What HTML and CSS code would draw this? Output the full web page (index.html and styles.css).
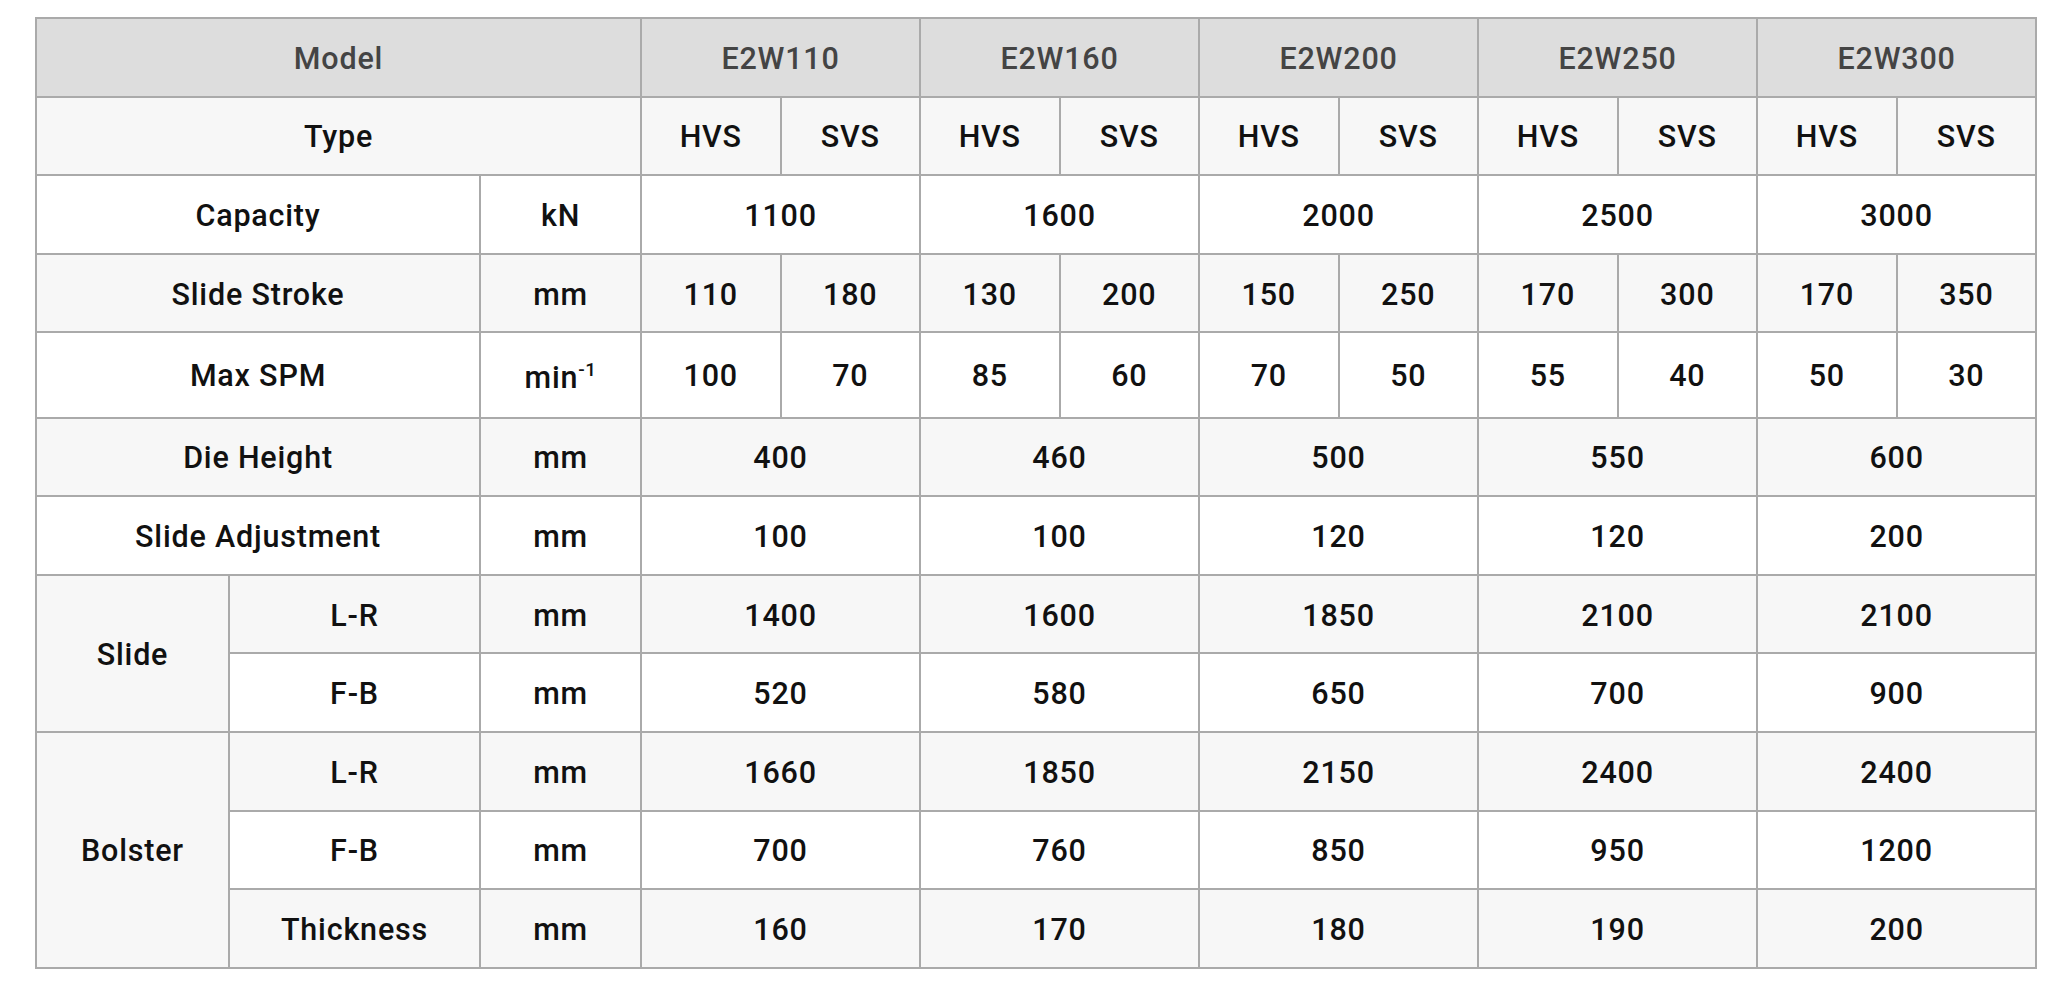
FILE: index.html
```html
<!DOCTYPE html>
<html lang="en">
<head>
<meta charset="utf-8">
<title>E2W Specifications</title>
<link rel="stylesheet" href="styles.css">
</head>
<body>
<table class="spec">
  <colgroup>
    <col class="c-group"><col class="c-label"><col class="c-unit">
    <col class="c-data"><col class="c-data"><col class="c-data"><col class="c-data"><col class="c-data">
    <col class="c-data"><col class="c-data"><col class="c-data"><col class="c-data"><col class="c-data">
  </colgroup>
  <thead>
    <tr>
      <th colspan="3">Model</th>
      <th colspan="2">E2W110</th>
      <th colspan="2">E2W160</th>
      <th colspan="2">E2W200</th>
      <th colspan="2">E2W250</th>
      <th colspan="2">E2W300</th>
    </tr>
  </thead>
  <tbody>
    <tr>
      <td colspan="3">Type</td>
      <td>HVS</td><td>SVS</td><td>HVS</td><td>SVS</td><td>HVS</td><td>SVS</td><td>HVS</td><td>SVS</td><td>HVS</td><td>SVS</td>
    </tr>
    <tr>
      <td colspan="2">Capacity</td><td>kN</td>
      <td colspan="2">1100</td><td colspan="2">1600</td><td colspan="2">2000</td><td colspan="2">2500</td><td colspan="2">3000</td>
    </tr>
    <tr>
      <td colspan="2">Slide Stroke</td><td>mm</td>
      <td>110</td><td>180</td><td>130</td><td>200</td><td>150</td><td>250</td><td>170</td><td>300</td><td>170</td><td>350</td>
    </tr>
    <tr class="spm">
      <td colspan="2">Max SPM</td><td class="unit-sup">min<sup>-1</sup></td>
      <td>100</td><td>70</td><td>85</td><td>60</td><td>70</td><td>50</td><td>55</td><td>40</td><td>50</td><td>30</td>
    </tr>
    <tr>
      <td colspan="2">Die Height</td><td>mm</td>
      <td colspan="2">400</td><td colspan="2">460</td><td colspan="2">500</td><td colspan="2">550</td><td colspan="2">600</td>
    </tr>
    <tr>
      <td colspan="2">Slide Adjustment</td><td>mm</td>
      <td colspan="2">100</td><td colspan="2">100</td><td colspan="2">120</td><td colspan="2">120</td><td colspan="2">200</td>
    </tr>
    <tr>
      <td rowspan="2">Slide</td><td>L-R</td><td>mm</td>
      <td colspan="2">1400</td><td colspan="2">1600</td><td colspan="2">1850</td><td colspan="2">2100</td><td colspan="2">2100</td>
    </tr>
    <tr>
      <td>F-B</td><td>mm</td>
      <td colspan="2">520</td><td colspan="2">580</td><td colspan="2">650</td><td colspan="2">700</td><td colspan="2">900</td>
    </tr>
    <tr>
      <td rowspan="3">Bolster</td><td>L-R</td><td>mm</td>
      <td colspan="2">1660</td><td colspan="2">1850</td><td colspan="2">2150</td><td colspan="2">2400</td><td colspan="2">2400</td>
    </tr>
    <tr>
      <td>F-B</td><td>mm</td>
      <td colspan="2">700</td><td colspan="2">760</td><td colspan="2">850</td><td colspan="2">950</td><td colspan="2">1200</td>
    </tr>
    <tr>
      <td>Thickness</td><td>mm</td>
      <td colspan="2">160</td><td colspan="2">170</td><td colspan="2">180</td><td colspan="2">190</td><td colspan="2">200</td>
    </tr>
  </tbody>
</table>
</body>
</html>
```
FILE: styles.css
```css
html, body {
  margin: 0;
  padding: 0;
  background: #ffffff;
}

.spec {
  border-collapse: collapse;
  table-layout: fixed;
  width: 2000px;
  margin: 17px 0 0 35px;
  font-family: Roboto, "Liberation Sans", Arial, sans-serif;
  font-weight: 500;
  font-size: 30.5px;
  letter-spacing: 0.8px;
  color: #111111;
}

.c-group { width: 193px; }
.c-label { width: 251px; }
.c-unit { width: 161px; }
.c-data { width: 139.5px; }

.spec th,
.spec td {
  border: 2px solid #aaaaaa;
  text-align: center;
  vertical-align: middle;
  height: 73.6px;
  padding: 3px 6px 0;
  line-height: 36px;
}

.spec th {
  background: #dddddd;
  color: #444444;
  font-weight: 500;
}

.spec tbody tr:nth-child(odd) td {
  background: #f7f7f7;
}

.spec tbody tr:nth-child(even) td {
  background: #ffffff;
}

.spec tr.spm td {
  height: 80.2px;
}

.spec tr.spm td.unit-sup {
  height: 76.2px;
  padding-top: 7px;
}

.spec sup {
  font-size: 19px;
  line-height: 0;
  letter-spacing: 0.4px;
  vertical-align: 12px;
}
```
